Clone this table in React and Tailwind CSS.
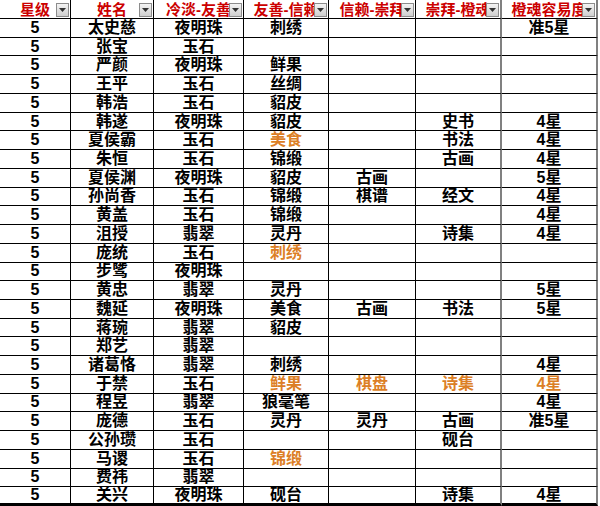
import React from "react";

const headers = ["星级", "姓名", "冷淡-友善", "友善-信赖", "信赖-崇拜", "崇拜-橙魂", "橙魂容易度"];

const O = (t) => ({ t, o: true });

const rows = [
  ["5", "太史慈", "夜明珠", "刺绣", "", "", "准5星"],
  ["5", "张宝", "玉石", "", "", "", ""],
  ["5", "严颜", "夜明珠", "鲜果", "", "", ""],
  ["5", "王平", "玉石", "丝绸", "", "", ""],
  ["5", "韩浩", "玉石", "貂皮", "", "", ""],
  ["5", "韩遂", "夜明珠", "貂皮", "", "史书", "4星"],
  ["5", "夏侯霸", "玉石", O("美食"), "", "书法", "4星"],
  ["5", "朱恒", "玉石", "锦缎", "", "古画", "4星"],
  ["5", "夏侯渊", "夜明珠", "貂皮", "古画", "", "5星"],
  ["5", "孙尚香", "玉石", "锦缎", "棋谱", "经文", "4星"],
  ["5", "黄盖", "玉石", "锦缎", "", "", "4星"],
  ["5", "沮授", "翡翠", "灵丹", "", "诗集", "4星"],
  ["5", "庞统", "玉石", O("刺绣"), "", "", ""],
  ["5", "步骘", "夜明珠", "", "", "", ""],
  ["5", "黄忠", "翡翠", "灵丹", "", "", "5星"],
  ["5", "魏延", "夜明珠", "美食", "古画", "书法", "5星"],
  ["5", "蒋琬", "翡翠", "貂皮", "", "", ""],
  ["5", "郑艺", "翡翠", "", "", "", ""],
  ["5", "诸葛恪", "翡翠", "刺绣", "", "", "4星"],
  ["5", "于禁", "玉石", O("鲜果"), O("棋盘"), O("诗集"), O("4星")],
  ["5", "程昱", "翡翠", "狼毫笔", "", "", "4星"],
  ["5", "庞德", "玉石", "灵丹", "灵丹", "古画", "准5星"],
  ["5", "公孙瓒", "玉石", "", "", "砚台", ""],
  ["5", "马谡", "玉石", O("锦缎"), "", "", ""],
  ["5", "费祎", "翡翠", "", "", "", ""],
  ["5", "关兴", "夜明珠", "砚台", "", "诗集", "4星"],
];

function Drop() {
  return (
    <div className="absolute right-[1px] top-[3px] w-[13px] h-[14px] border border-[#8c8c8c] bg-gradient-to-b from-[#f4f4f4] to-[#cfcfcf] flex items-center justify-center">
      <svg width="7" height="4" viewBox="0 0 7 4">
        <polygon points="0,0 7,0 3.5,4" fill="#333" />
      </svg>
    </div>
  );
}

export default function App() {
  const font = { fontFamily: '"Liberation Sans", "Noto Sans CJK SC", sans-serif' };
  const last = rows.length - 1;
  return (
    <div className="w-[600px] h-[506px] bg-white overflow-hidden" style={font}>
      <div className="grid w-[598px] h-[506px] grid-cols-[71px_83px_90px_85px_87px_86px_96px] grid-rows-[19px_repeat(26,minmax(0,1fr))]">
        {headers.map((h, i) => (
          <div
            key={"h" + i}
            className={
              "relative overflow-hidden border-b border-black flex items-center justify-center text-[15px] font-bold text-[#cc0000] leading-none whitespace-nowrap " +
              (i >= 5 ? "border-r-2 border-r-[#808080]" : "border-r border-r-black")
            }
          >
            <span>{h}</span>
            <Drop />
          </div>
        ))}
        {rows.map((r, ri) =>
          r.map((c, ci) => {
            const isO = typeof c === "object";
            const t = isO ? c.t : c;
            return (
              <div
                key={ri + "-" + ci}
                className={
                  "flex items-center justify-center text-[16px] font-bold leading-none whitespace-nowrap overflow-hidden " +
                  (isO ? "text-[#dc7f26] " : "text-black ") +
                  (ri === last ? "border-b-[3px] border-black " : "border-b border-black ") +
                  (ci >= 5 ? "border-r-2 border-r-[#808080]" : "border-r border-r-black")
                }
              >
                {t}
              </div>
            );
          })
        )}
      </div>
    </div>
  );
}
